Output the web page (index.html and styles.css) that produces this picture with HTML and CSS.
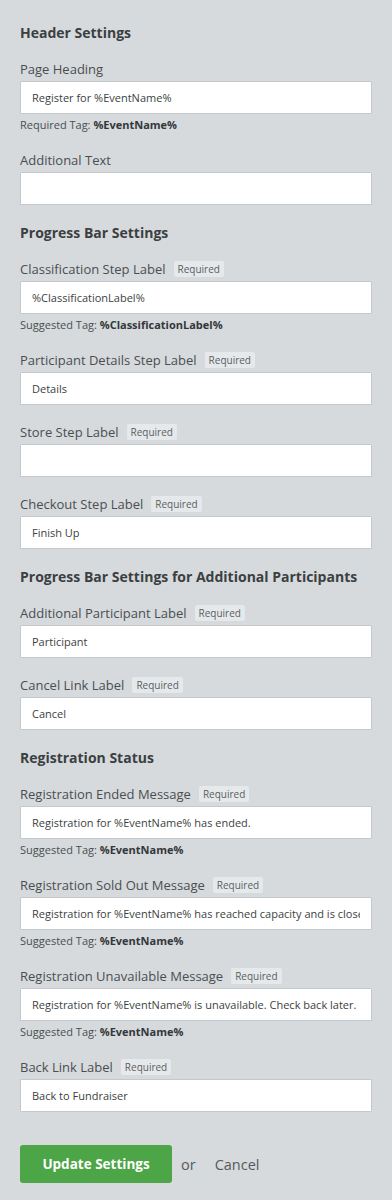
FILE: index.html
```html
<!DOCTYPE html>
<html lang="en">
<head>
<meta charset="utf-8">
<title>Registration Settings</title>
<link rel="stylesheet" href="styles.css">
</head>
<body>
<form class="settings">
  <h2 class="section-title">Header Settings</h2>
  <div class="field">
    <div class="label-row"><label class="label">Page Heading</label></div>
    <input class="input" type="text" value="Register for %EventName%">
    <p class="help">Required Tag: <b>%EventName%</b></p>
  </div>
  <div class="field">
    <div class="label-row"><label class="label">Additional Text</label></div>
    <input class="input" type="text" value="">
  </div>

  <h2 class="section-title">Progress Bar Settings</h2>
  <div class="field">
    <div class="label-row"><label class="label">Classification Step Label</label><span class="badge">Required</span></div>
    <input class="input" type="text" value="%ClassificationLabel%">
    <p class="help">Suggested Tag: <b>%ClassificationLabel%</b></p>
  </div>
  <div class="field">
    <div class="label-row"><label class="label">Participant Details Step Label</label><span class="badge">Required</span></div>
    <input class="input" type="text" value="Details">
  </div>
  <div class="field">
    <div class="label-row"><label class="label">Store Step Label</label><span class="badge">Required</span></div>
    <input class="input" type="text" value="">
  </div>
  <div class="field">
    <div class="label-row"><label class="label">Checkout Step Label</label><span class="badge">Required</span></div>
    <input class="input" type="text" value="Finish Up">
  </div>

  <h2 class="section-title">Progress Bar Settings for Additional Participants</h2>
  <div class="field">
    <div class="label-row"><label class="label">Additional Participant Label</label><span class="badge">Required</span></div>
    <input class="input" type="text" value="Participant">
  </div>
  <div class="field">
    <div class="label-row"><label class="label">Cancel Link Label</label><span class="badge">Required</span></div>
    <input class="input" type="text" value="Cancel">
  </div>

  <h2 class="section-title">Registration Status</h2>
  <div class="field">
    <div class="label-row"><label class="label">Registration Ended Message</label><span class="badge">Required</span></div>
    <input class="input" type="text" value="Registration for %EventName% has ended.">
    <p class="help">Suggested Tag: <b>%EventName%</b></p>
  </div>
  <div class="field">
    <div class="label-row"><label class="label">Registration Sold Out Message</label><span class="badge">Required</span></div>
    <input class="input" type="text" value="Registration for %EventName% has reached capacity and is closed.">
    <p class="help">Suggested Tag: <b>%EventName%</b></p>
  </div>
  <div class="field">
    <div class="label-row"><label class="label">Registration Unavailable Message</label><span class="badge">Required</span></div>
    <input class="input" type="text" value="Registration for %EventName% is unavailable. Check back later.">
    <p class="help">Suggested Tag: <b>%EventName%</b></p>
  </div>
  <div class="field">
    <div class="label-row"><label class="label">Back Link Label</label><span class="badge">Required</span></div>
    <input class="input" type="text" value="Back to Fundraiser">
  </div>

  <div class="actions">
    <button class="btn-primary" type="button">Update Settings</button>
    <span class="or">or</span>
    <a class="cancel" href="#">Cancel</a>
  </div>
</form>
</body>
</html>
```

FILE: styles.css
```css
html, body {
  margin: 0;
  padding: 0;
  background: #d6dadd;
}
body {
  font-family: "Open Sans", "Liberation Sans", sans-serif;
  color: #3f4346;
}
.settings {
  padding: 24px 20px 40px;
}
.section-title {
  margin: 19px 0 18px;
  font-size: 14px;
  line-height: 18px;
  font-weight: 700;
  color: #3b3f42;
}
.settings > .section-title:first-child {
  margin-top: 0;
}
.field {
  margin-bottom: 18px;
}
.label-row {
  display: flex;
  align-items: center;
  height: 18px;
  margin-bottom: 3px;
}
.label {
  font-size: 13px;
  line-height: 18px;
  color: #4a4e51;
}
.badge {
  margin-left: 8px;
  height: 16px;
  padding: 0 4px;
  background: #e6e9eb;
  border-radius: 2px;
  font-size: 10px;
  line-height: 17px;
  color: #5a5e61;
}
.input {
  display: block;
  box-sizing: border-box;
  width: 100%;
  height: 33px;
  margin: 0;
  padding: 0 11px;
  border: 1px solid #c3c8cc;
  border-radius: 1px;
  background: #fff;
  font-family: "Open Sans", "Liberation Sans", sans-serif;
  font-size: 11px;
  color: #3c3f42;
  outline: none;
}
.help {
  margin: 3px 0 0;
  font-size: 11px;
  line-height: 16px;
  color: #4a4e51;
}
.help b {
  font-weight: 700;
  color: #33373a;
}
.actions {
  display: flex;
  align-items: center;
  margin-top: 33px;
}
.btn-primary {
  box-sizing: border-box;
  width: 152px;
  height: 38px;
  border: 0;
  border-radius: 3px;
  background: #4ca546;
  color: #fff;
  font-family: "Open Sans", "Liberation Sans", sans-serif;
  font-size: 13.5px;
  font-weight: 700;
  cursor: pointer;
}
.or {
  margin-left: 9px;
  font-size: 14.5px;
  color: #55595c;
}
.cancel {
  margin-left: 19px;
  font-size: 14.5px;
  color: #55595c;
  text-decoration: none;
}
```
